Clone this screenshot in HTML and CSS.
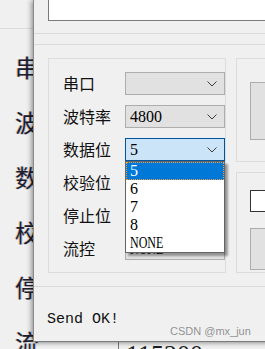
FILE: index.html
```html
<!DOCTYPE html>
<html lang="zh-CN">
<head>
    <meta charset="UTF-8">
    <title>Serial settings</title>
    <link rel="stylesheet" href="styles.css">
</head>
<body>
<div class="back-window">
    <div class="back-top"></div>
    <div class="back-row"><span class="back-label">串</span><span class="back-field"></span></div>
    <div class="back-row"><span class="back-label">波</span><span class="back-field"></span></div>
    <div class="back-row"><span class="back-label">数</span><span class="back-field"></span></div>
    <div class="back-row"><span class="back-label">校</span><span class="back-field"></span></div>
    <div class="back-row"><span class="back-label">停</span><span class="back-field"></span></div>
    <div class="back-row"><span class="back-label">流</span><span class="back-field">115200</span></div>
</div>

<div class="front-window">
    <div class="edit-box"></div>
    <div class="splitter"></div>

    <div class="content">
        <div class="group settings">
            <div class="setting-row">
                <span class="setting-label">串口</span>
                <div class="combo"><span class="combo-text"></span><svg class="chevron" width="10" height="6" viewBox="0 0 10 6"><polyline points="0.5,0.5 5,5 9.5,0.5"/></svg></div>
            </div>
            <div class="setting-row">
                <span class="setting-label">波特率</span>
                <div class="combo"><span class="combo-text">4800</span><svg class="chevron" width="10" height="6" viewBox="0 0 10 6"><polyline points="0.5,0.5 5,5 9.5,0.5"/></svg></div>
            </div>
            <div class="setting-row">
                <span class="setting-label">数据位</span>
                <div class="combo combo-focus"><span class="combo-text">5</span><svg class="chevron" width="10" height="6" viewBox="0 0 10 6"><polyline points="0.5,0.5 5,5 9.5,0.5"/></svg>
                    <ul class="dropdown">
                        <li class="selected">5</li>
                        <li>6</li>
                        <li>7</li>
                        <li>8</li>
                        <li><span class="narrow">NONE</span></li>
                    </ul>
                </div>
            </div>
            <div class="setting-row">
                <span class="setting-label">校验位</span>
                <div class="combo"></div>
            </div>
            <div class="setting-row">
                <span class="setting-label">停止位</span>
                <div class="combo"></div>
            </div>
            <div class="setting-row">
                <span class="setting-label">流控</span>
                <div class="combo"><span class="combo-text narrow">NONE</span></div>
            </div>
        </div>

        <div class="side">
            <div class="group side-top">
                <div class="side-button"></div>
            </div>
            <div class="group side-bottom">
                <div class="side-check"></div>
                <div class="side-button small"></div>
            </div>
        </div>
    </div>

    <div class="status">Send OK!</div>
</div>

<div class="watermark">CSDN @mx_jun</div>
</body>
</html>
```

FILE: styles.css
```css
body {
    margin: 0;
    width: 265px;
    height: 349px;
    overflow: hidden;
    background: #f0f0f0;
    position: relative;
    font-family: "Noto Sans CJK SC", "Liberation Sans", sans-serif;
}

/* window behind */
.back-window {
    height: 349px;
    overflow: hidden;
    padding-left: 15px;
}

.back-top {
    height: 28px;
    margin-left: -15px;
    border-bottom: 1px solid #dcdcdc;
    margin-bottom: 10px;
}

.back-row {
    display: flex;
    align-items: center;
    height: 55px;
}

.back-label {
    width: 103px;
    font-size: 24px;
    line-height: 30px;
    color: #1e1e30;
    text-shadow: -1px 0 rgba(200, 120, 40, 0.35), 1px 0 rgba(40, 110, 220, 0.35);
}

.back-field {
    height: 30px;
    margin-top: 27px;
    padding-left: 7px;
    border-left: 1px solid #7a7a7a;
    font-family: "Liberation Serif", serif;
    font-size: 26px;
    line-height: 30px;
    color: #1e1e1e;
}

/* dialog in front */
.front-window {
    position: absolute;
    left: 33px;
    top: 0;
    width: 240px;
    height: 341px;
    background: #f0f0f0;
    border-left: 1px solid #8a8a8a;
    border-bottom: 1px solid #7a7a7a;
    box-shadow: -2px 0 5px rgba(0, 0, 0, 0.3), 0 2px 4px rgba(0, 0, 0, 0.15);
}

.edit-box {
    height: 20px;
    margin-left: 14px;
    background: #fff;
    border-left: 1px solid #7a7a7a;
    border-bottom: 1px solid #7a7a7a;
}

.splitter {
    height: 10px;
    margin-top: 12px;
    border-top: 1px solid #dadada;
    border-bottom: 1px solid #dadada;
}

.content {
    display: flex;
    gap: 10px;
    padding: 13px 0 0 14px;
}

.group {
    border: 1px solid #dcdcdc;
    box-sizing: border-box;
}

.settings {
    width: 190px;
    height: 215px;
    padding: 13px 0 0 14px;
    display: flex;
    flex-direction: column;
    gap: 10px;
}

.setting-row {
    display: flex;
    align-items: center;
    height: 23px;
}

.setting-label {
    width: 62px;
    font-size: 16px;
    line-height: 23px;
    color: #111;
}

.combo {
    position: relative;
    display: flex;
    align-items: center;
    justify-content: space-between;
    width: 100px;
    height: 23px;
    box-sizing: border-box;
    padding: 0 7px 0 4px;
    background: #e1e1e1;
    border: 1px solid #adadad;
    font-family: "Liberation Serif", serif;
    font-size: 16px;
}

.combo-focus {
    background: #cce4f7;
    border-color: #005499;
}

.chevron {
    fill: none;
    stroke: #3c3c3c;
    stroke-width: 1;
}

.narrow {
    display: inline-block;
    transform: scaleX(0.75);
    transform-origin: left center;
}

.dropdown {
    position: absolute;
    left: -1px;
    top: 22px;
    width: 100px;
    margin: 0;
    padding: 0;
    list-style: none;
    box-sizing: border-box;
    background: #fff;
    border: 1px solid #646464;
    box-shadow: 3px 3px 2px rgba(0, 0, 0, 0.35);
    z-index: 2;
}

.dropdown li {
    height: 18px;
    line-height: 18px;
    padding-left: 4px;
    color: #000;
}

.dropdown .selected {
    background: #0078d7;
    color: #fff;
    outline: 1px dotted #e8a04c;
    outline-offset: -1px;
}

.side {
    display: flex;
    flex-direction: column;
    gap: 10px;
}

.side-top {
    width: 40px;
    height: 104px;
    padding: 23px 0 0 13px;
}

.side-bottom {
    width: 40px;
    height: 101px;
    padding: 17px 0 0 13px;
}

.side-button {
    height: 56px;
    background: #e1e1e1;
    border: 1px solid #adadad;
    border-right: none;
}

.side-button.small {
    height: 40px;
    margin-top: 16px;
}

.side-check {
    height: 20px;
    background: #fff;
    border: 1px solid #333;
    border-right: none;
}

.status {
    margin-top: 13px;
    border-top: 1px solid #dadada;
    padding: 24px 0 0 13px;
    font-family: "Liberation Mono", monospace;
    font-size: 15px;
    line-height: 18px;
    color: #111;
}

.watermark {
    position: absolute;
    left: 170px;
    top: 325px;
    font-family: "Liberation Sans", sans-serif;
    font-size: 11px;
    color: rgba(120, 120, 120, 0.8);
}
```
